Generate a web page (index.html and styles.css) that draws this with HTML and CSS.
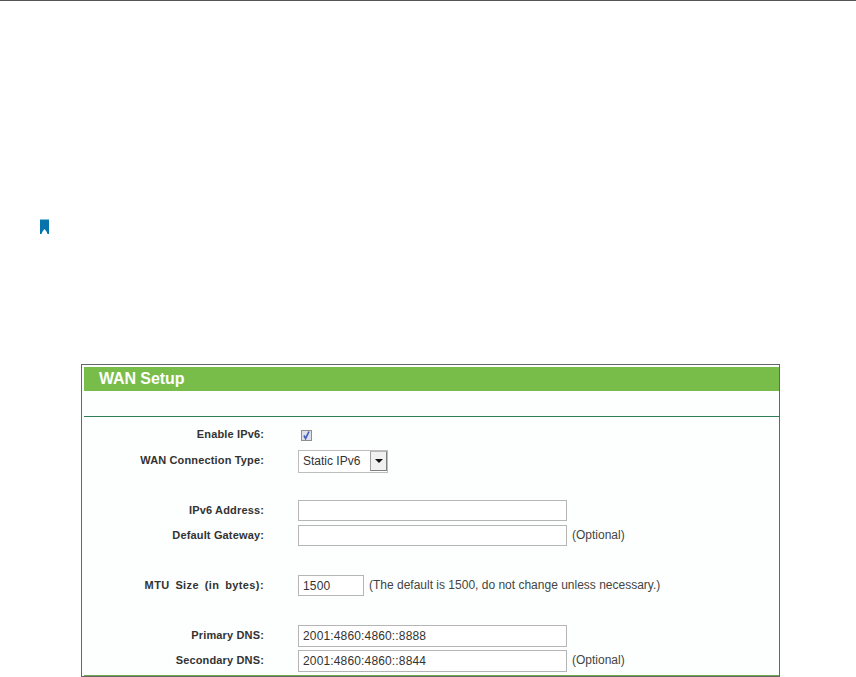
FILE: index.html
```html
<!doctype html>
<html lang="en">
<head>
    <meta charset="UTF-8">
    <title>WAN Setup</title>
    <link rel="stylesheet" href="styles.css">
</head>
<body>
    <div class="top-rule"></div>
    <div class="note-mark">
        <svg width="9" height="15" viewBox="0 0 9 15"><rect width="9" height="1" fill="#7fc0dc"/><path d="M0 1H9V15H7.5L6.5 12.5 4.5 10 2.5 12.5 1.5 15H0Z" fill="#0673aa"/></svg>
    </div>
    <div class="panel">
        <h2 class="panel-title">WAN Setup</h2>
        <div class="panel-gap"></div>
        <form class="form">
            <div class="row row-check">
                <label>Enable IPv6:</label>
                <span class="check">
                    <svg width="9" height="9" viewBox="0 0 9 9"><path d="M2 4.5L3.6 7.5 7 .5" fill="none" stroke="#4460b8" stroke-width="1.7"/></svg>
                </span>
            </div>
            <div class="row row-select">
                <label>WAN Connection Type:</label>
                <div class="select">
                    <span class="select-text">Static IPv6</span>
                    <span class="select-btn"><i class="arrow"></i></span>
                </div>
            </div>
            <div class="row row-addr">
                <label>IPv6 Address:</label>
                <input class="field" type="text">
            </div>
            <div class="row row-next">
                <label>Default Gateway:</label>
                <input class="field" type="text">
                <span class="hint">(Optional)</span>
            </div>
            <div class="row row-mtu">
                <label class="label-wide">MTU Size (in bytes):</label>
                <input class="field field-short" type="text" value="1500">
                <span class="hint">(The default is 1500, do not change unless necessary.)</span>
            </div>
            <div class="row row-dns">
                <label>Primary DNS:</label>
                <input class="field field-tall" type="text" value="2001:4860:4860::8888">
            </div>
            <div class="row row-next-dns">
                <label>Secondary DNS:</label>
                <input class="field field-tall" type="text" value="2001:4860:4860::8844">
                <span class="hint">(Optional)</span>
            </div>
        </form>
    </div>
</body>
</html>
```

FILE: styles.css
```css
* {
    margin: 0;
    padding: 0;
    box-sizing: border-box;
}
html, body {
    height: 677px;
    overflow: hidden;
}
body {
    font-family: "Liberation Sans", Arial, sans-serif;
    background-color: #fff;
    color: #333;
}
.top-rule {
    height: 1px;
    background-color: #555;
}
.note-mark {
    height: 15px;
    margin: 218px 0 0 40px;
}
.note-mark svg {
    display: block;
}
.panel {
    display: flex;
    flex-direction: column;
    width: 699px;
    height: 313px;
    margin: 130px 0 0 81px;
    padding: 2px 0 0 2px;
    border: 1px solid #666;
    background-color: #fcfffe;
}
.panel-title {
    height: 24px;
    padding-left: 15px;
    background-color: #78bd4a;
    color: #fff;
    font-size: 16px;
    line-height: 23px;
    font-weight: bold;
    letter-spacing: -0.1px;
}
.panel-gap {
    height: 26px;
    border-bottom: 1px solid #2f7d55;
}
.form {
    flex: 1;
    border-bottom: 1px solid #6ea84f;
}
.row {
    display: flex;
    align-items: center;
}
.row label {
    width: 180px;
    margin-right: 34px;
    padding-bottom: 2px;
    text-align: right;
    font-size: 11px;
    font-weight: bold;
    letter-spacing: 0.15px;
    color: #333;
}
.row .label-wide {
    letter-spacing: 0.4px;
    word-spacing: 2.3px;
}
.row-check {
    height: 20px;
    margin-top: 8px;
}
.check {
    display: flex;
    align-items: center;
    justify-content: center;
    width: 11px;
    height: 11px;
    margin-left: 3px;
    border: 1px solid #8f8f8f;
    background-color: #dde0ea;
}
.row-select {
    height: 22px;
    margin-top: 5px;
}
.select {
    display: flex;
    align-items: center;
    justify-content: space-between;
    width: 90px;
    height: 23px;
    padding-left: 4px;
    border: 1px solid #bdbdbd;
    background-color: #fff;
}
.select-text {
    font-size: 12px;
    color: #333;
}
.select-btn {
    display: flex;
    align-items: center;
    justify-content: center;
    width: 17px;
    height: 20px;
    border: 1px solid #808080;
    border-top-color: #b8b8b8;
    border-left-color: #a0a0a0;
    background-color: #f1f1f1;
}
.arrow {
    border-style: solid;
    border-width: 4px 4px 0;
    border-color: #111 transparent transparent;
}
.row-addr {
    margin-top: 28px;
}
.row-next {
    margin-top: 4px;
}
.row-mtu {
    margin-top: 29px;
}
.row-dns {
    margin-top: 29px;
}
.row-next-dns {
    margin-top: 3px;
}
.field {
    width: 269px;
    height: 21px;
    padding: 0 4px;
    border: 1px solid #b5b5b5;
    background-color: #fff;
    font-family: "Liberation Sans", Arial, sans-serif;
    font-size: 12px;
    letter-spacing: 0.15px;
    color: #333;
    outline: none;
}
.field-short {
    width: 66px;
}
.field-tall {
    height: 22px;
}
.hint {
    padding-bottom: 2px;
    margin-left: 5px;
    font-size: 12px;
    color: #444;
}
```
